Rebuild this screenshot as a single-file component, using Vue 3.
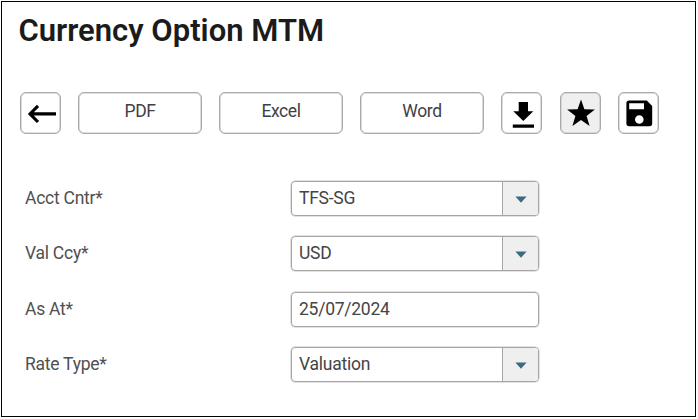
<script setup>
const exportFormats = ['PDF', 'Excel', 'Word']

const fields = [
  { id: 'acct', label: 'Acct Cntr*', value: 'TFS-SG', select: true },
  { id: 'ccy', label: 'Val Ccy*', value: 'USD', select: true },
  { id: 'asat', label: 'As At*', value: '25/07/2024', select: false },
  { id: 'rate', label: 'Rate Type*', value: 'Valuation', select: true },
]
</script>

<template>
  <main class="panel">
    <h1 class="title">Currency Option MTM</h1>

    <div class="toolbar">
      <button class="btn icon" type="button" aria-label="Back">
        <svg viewBox="0 0 41 42">
          <path d="M36 21.9H10.5M18 13.8L10 21.9L18 30" fill="none" stroke="#000" stroke-width="3.1" />
        </svg>
      </button>
      <button v-for="format in exportFormats" :key="format" class="btn wide" type="button">
        {{ format }}
      </button>
      <button class="btn icon" type="button" aria-label="Download">
        <svg viewBox="0 0 41 42">
          <path d="M17.7 10H27V19.2H32.3L22.3 29L12.3 19.2H17.7ZM11.8 32.6H33V35.8H11.8Z" />
        </svg>
      </button>
      <button class="btn icon starred" type="button" aria-label="Favourite">
        <svg viewBox="0 0 41 42">
          <path d="M21 7.5L24.4 17.3L34.9 17.6L26.6 24L29.6 34L21 28.1L12.4 34L15.4 24L7.1 17.6L17.6 17.3Z" />
        </svg>
      </button>
      <button class="btn icon" type="button" aria-label="Save">
        <svg viewBox="0 0 41 42">
          <path fill-rule="evenodd" d="M11.2 8.5H28.8L34.2 13.9V31.5Q34.2 34.3 31.4 34.3H11.2Q8.4 34.3 8.4 31.5V11.3Q8.4 8.5 11.2 8.5ZM11.2 11.3V17.2H26V11.3ZM21.3 23.2A4.3 4.3 0 1 0 21.3 31.8A4.3 4.3 0 1 0 21.3 23.2Z" />
        </svg>
      </button>
    </div>

    <form class="fields">
      <div v-for="field in fields" :key="field.id" class="row">
        <span class="label">{{ field.label }}</span>
        <div class="control">
          <span class="value">{{ field.value }}</span>
          <span v-if="field.select" class="toggle">
            <svg viewBox="0 0 12 7"><path d="M0.4 0.5H11.6L6 6.8Z" /></svg>
          </span>
        </div>
      </div>
    </form>
  </main>
</template>

<style>
body {
  background: #fff;
}
</style>

<style scoped>
.panel {
  box-sizing: border-box;
  width: 695px;
  height: 416px;
  margin: 1px;
  padding: 9px 0 0 18px;
  border: 1px solid #000;
  overflow: hidden;
  background: #fff;
  font-family: Roboto, 'Liberation Sans', sans-serif;
}

.title {
  margin: 0 0 41px -1.5px;
  height: 40px;
  line-height: 40px;
  font-size: 31px;
  font-weight: 600;
  color: #1b1b1b;
  white-space: nowrap;
}

.toolbar {
  display: flex;
  height: 42px;
  gap: 17px;
}

.btn {
  box-sizing: border-box;
  flex: none;
  height: 42px;
  margin: 0;
  padding: 0;
  border: 1px solid #a9a9a9;
  box-shadow: inset 0 0 0 0.6px #c4c4c4;
  border-radius: 6px;
  background: #fff;
  font-family: inherit;
  font-size: 17.5px;
  letter-spacing: -0.4px;
  color: #3f3f46;
}

.icon {
  width: 41px;
}

.icon svg {
  display: block;
  width: 41px;
  height: 42px;
  margin: -1px;
}

.wide {
  width: 124px;
  line-height: 35px;
  padding-bottom: 3px;
}

.starred {
  margin-left: 1px;
  background: #efefef;
}

.starred + .icon {
  margin-left: -0.5px;
}

.fields {
  display: grid;
  grid-auto-rows: 35px;
  row-gap: 20.4px;
  margin-top: 47px;
  padding-left: 5px;
}

.row {
  display: grid;
  grid-template-columns: 266px 248px;
}

.label,
.value {
  line-height: 33px;
  font-size: 17.5px;
  letter-spacing: -0.25px;
  color: #505050;
  white-space: nowrap;
}

.label {
  line-height: 34px;
}

.control {
  box-sizing: border-box;
  display: flex;
  height: 35px;
  border: 1px solid #a6a6a6;
  box-shadow: 0 0 0 0.5px #c8c8c8;
  border-radius: 4px;
  overflow: hidden;
}

.value {
  flex: 1;
  padding-left: 7px;
  color: #454545;
}

.toggle {
  display: flex;
  align-items: center;
  justify-content: center;
  width: 35px;
  border-left: 1px solid #a6a6a6;
  background: #efefef;
}

.toggle svg {
  width: 12px;
  height: 7px;
  margin-top: 2px;
  fill: #3b6a82;
}
</style>
